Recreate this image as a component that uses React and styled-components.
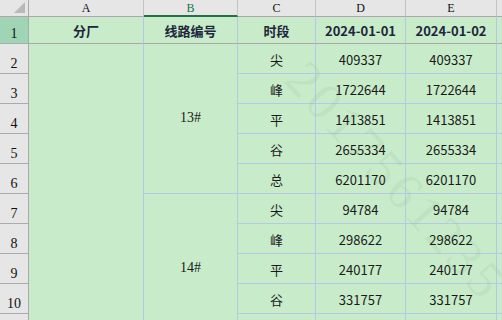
import React from 'react'
import styled, { createGlobalStyle } from 'styled-components'

const GlobalStyle = createGlobalStyle`
  html, body { margin: 0; padding: 0; background: #fff; }
  body { width: 502px; height: 320px; overflow: hidden; }
`

const Sheet = styled.div`
  position: relative;
  width: 502px;
  height: 320px;
  overflow: hidden;
  display: grid;
  grid-template-columns: 29px 115px 94px 78px 90px 91px 15px;
  grid-template-rows: 17px 27px repeat(10, 30px);
  background: #c8ecca;
  font-family: "Noto Sans CJK SC", "Noto Sans", sans-serif;
  font-size: 13px;
  color: #1a1a1a;
`

const Corner = styled.div`
  position: relative;
  background: #e6e6e6;
  border-right: 1px solid #a9a9a9;
  border-bottom: 1px solid #a9a9a9;
  box-sizing: border-box;
  &::after {
    content: '';
    position: absolute;
    right: 3px;
    bottom: 3px;
    border-left: 11px solid transparent;
    border-bottom: 11px solid #b9b9b9;
  }
`

const ColHead = styled.div`
  display: flex;
  align-items: center;
  justify-content: center;
  box-sizing: border-box;
  background: #e6e6e6;
  border-right: 1px solid #c4c4c4;
  border-bottom: ${p => (p.$active ? '2px solid #217346' : '1px solid #a9a9a9')};
  padding-top: ${p => (p.$active ? '1px' : '0')};
  font-family: "Liberation Serif", serif;
  font-size: 12px;
  color: ${p => (p.$active ? '#217346' : '#111')};
`

const RowHead = styled.div`
  display: flex;
  align-items: flex-end;
  justify-content: center;
  box-sizing: border-box;
  padding-bottom: 1px;
  background: ${p => (p.$active ? '#9fd5b5' : '#e6e6e6')};
  border-right: 1px solid #a9a9a9;
  border-bottom: 1px solid #ababab;
  font-family: "Liberation Serif", serif;
  font-size: 14px;
  color: #111;
`

const Cell = styled.div`
  display: flex;
  align-items: center;
  justify-content: center;
  box-sizing: border-box;
  padding-top: ${p => (p.$head ? '0' : '1px')};
  border-right: 1px solid #b5c9e6;
  border-bottom: 1px solid ${p => (p.$head ? '#a9a9a9' : '#b5c9e6')};
  font-weight: ${p => (p.$bold ? 700 : 400)};
  color: ${p => (p.$bold ? '#22263a' : '#1a1a1a')};
  grid-row: ${p => p.$rows || 'auto'};
  grid-column: ${p => p.$col || 'auto'};
`

const LineNo = styled(Cell)`
  font-family: "Liberation Serif", serif;
  font-size: 14px;
  padding-bottom: 2px;
`

const Watermark = styled.div`
  position: absolute;
  left: 296px;
  top: 40px;
  transform: rotate(48deg);
  transform-origin: left center;
  font-family: "Liberation Serif", serif;
  font-size: 52px;
  letter-spacing: 4px;
  color: rgba(90, 110, 95, 0.08);
  white-space: nowrap;
  pointer-events: none;
`

const cols = ['A', 'B', 'C', 'D', 'E', '']
const periods = ['尖', '峰', '平', '谷', '总']
const line13 = [409337, 1722644, 1413851, 2655334, 6201170]
const line14 = [94784, 298622, 240177, 331757]

export default function App() {
  const rows = [
    ...line13.map((v, i) => ({ p: periods[i], v })),
    ...line14.map((v, i) => ({ p: periods[i], v })),
    { p: '', v: '' },
  ]

  return (
    <>
      <GlobalStyle />
      <Sheet>
        <Corner />
        {cols.map(c => (
          <ColHead key={c || 'F'} $active={c === 'B'}>{c}</ColHead>
        ))}

        <RowHead $active>1</RowHead>
        <Cell $head $bold>分厂</Cell>
        <Cell $head $bold>线路编号</Cell>
        <Cell $head $bold>时段</Cell>
        <Cell $head $bold>2024-01-01</Cell>
        <Cell $head $bold>2024-01-02</Cell>
        <Cell $head />

        <Cell $col="2" $rows="3 / span 10" />
        <LineNo $col="3" $rows="3 / span 5">13#</LineNo>
        <LineNo $col="3" $rows="8 / span 5">14#</LineNo>

        {rows.map((r, i) => (
          <React.Fragment key={i}>
            <RowHead style={{ gridRow: i + 3, gridColumn: 1 }}>{i < 9 ? i + 2 : ''}</RowHead>
            <Cell $col="4" $rows={String(i + 3)}>{r.p}</Cell>
            <Cell $col="5" $rows={String(i + 3)}>{r.v}</Cell>
            <Cell $col="6" $rows={String(i + 3)}>{r.v}</Cell>
            <Cell $col="7" $rows={String(i + 3)} />
          </React.Fragment>
        ))}

        <Watermark>2017561235</Watermark>
      </Sheet>
    </>
  )
}
